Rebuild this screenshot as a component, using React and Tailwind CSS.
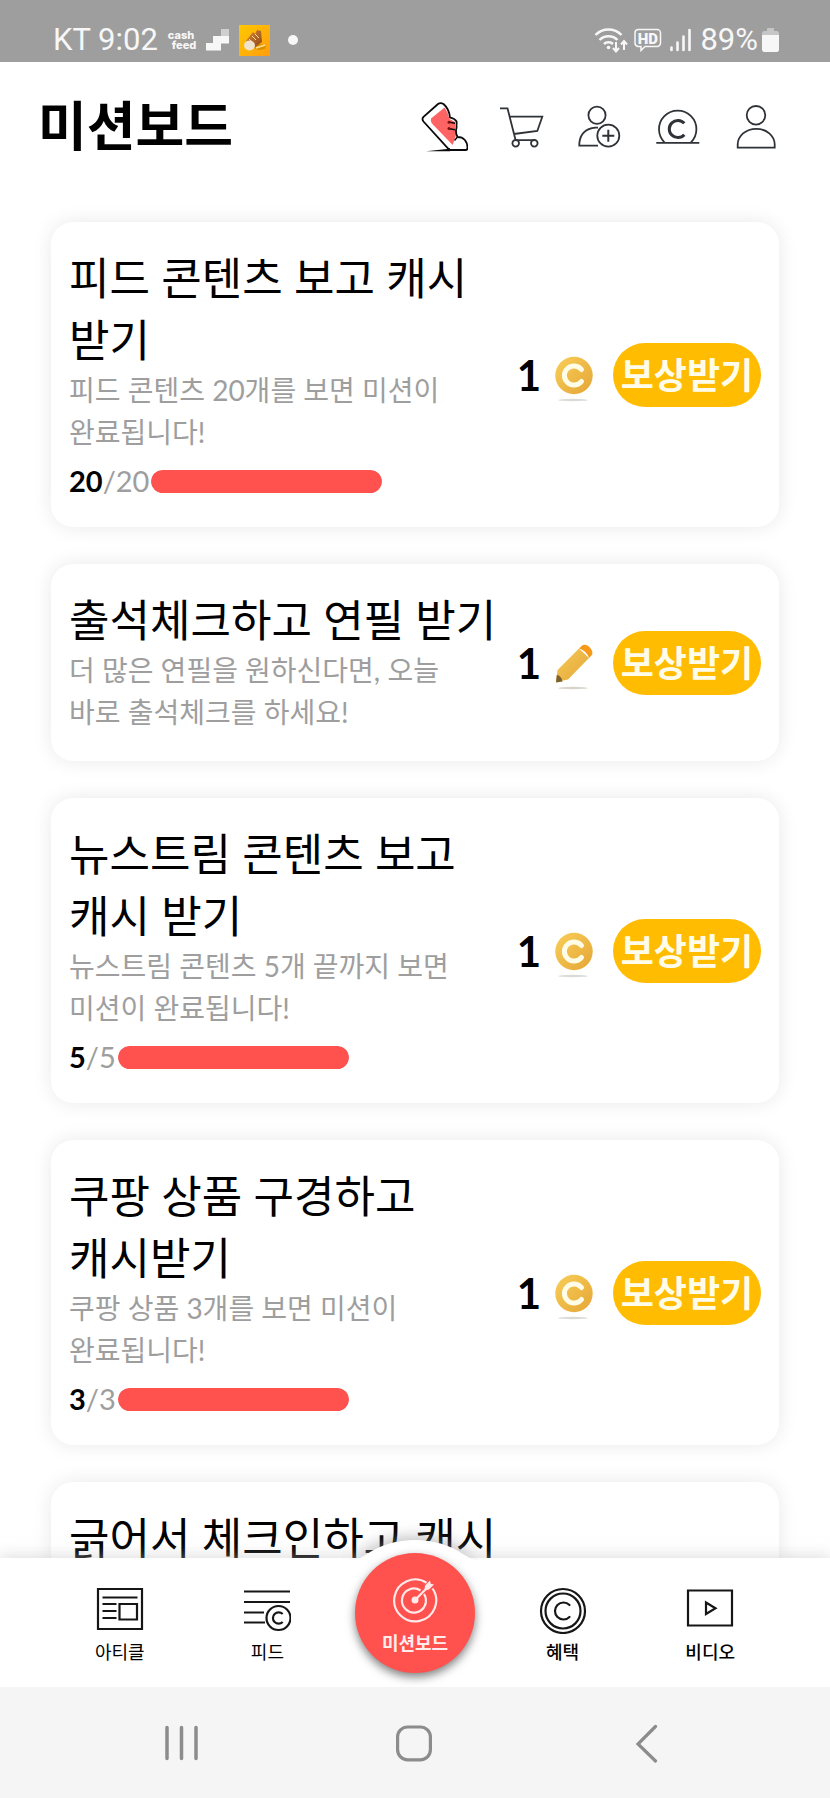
import React from 'react';

const missions = [
  {
    title: '피드 콘텐츠 보고 캐시 받기',
    desc: '피드 콘텐츠 20개를 보면 미션이 완료됩니다!',
    current: 20,
    total: 20,
    reward: 'coin',
  },
  {
    title: '출석체크하고 연필 받기',
    desc: '더 많은 연필을 원하신다면, 오늘 바로 출석체크를 하세요!',
    reward: 'pencil',
  },
  {
    title: '뉴스트림 콘텐츠 보고 캐시 받기',
    desc: '뉴스트림 콘텐츠 5개 끝까지 보면 미션이 완료됩니다!',
    current: 5,
    total: 5,
    reward: 'coin',
  },
  {
    title: '쿠팡 상품 구경하고 캐시받기',
    desc: '쿠팡 상품 3개를 보면 미션이 완료됩니다!',
    current: 3,
    total: 3,
    reward: 'coin',
  },
  { title: '긁어서 체크인하고 캐시' },
];

const StatusBar = () => (
  <div className="flex shrink-0 items-center justify-between bg-[#9e9e9e] pt-[18px] pr-[51px] pl-[53px] font-[Roboto,sans-serif] text-[31px] leading-[44px] text-[#f7f7f7]">
    <div className="flex items-center">
      <span>KT 9:02</span>
      <span className="ml-[10px] flex flex-col font-[Inter,sans-serif] text-[11px] leading-[10px] font-extrabold">
        <span>cash</span>
        <span className="pl-1">feed</span>
      </span>
      <svg className="ml-[10px]" width="23" height="22" viewBox="0 0 23 22">
        <path d="M15 0h8v7h-8z" fill="#cfcfcf" />
        <path d="M7 7h16v7.500h-8V21.500H0V14h7z" fill="#f7f7f7" />
      </svg>
      <svg className="ml-[10px]" width="31" height="31" viewBox="0 0 31 31">
        <defs>
          <linearGradient id="appBg" x1="0" y1="0" x2="1" y2="1">
            <stop offset="0" stopColor="#ffc800" />
            <stop offset="1" stopColor="#ff9d10" />
          </linearGradient>
          <linearGradient id="boot" x1="0" y1="0" x2="1" y2="1">
            <stop offset="0" stopColor="#d98a3a" />
            <stop offset="1" stopColor="#8f4413" />
          </linearGradient>
        </defs>
        <rect width="31" height="31" fill="url(#appBg)" />
        <ellipse cx="21" cy="22" rx="6" ry="3" fill="#d99100" />
        <path d="M17 23l9-3" stroke="#ffe08a" strokeWidth="1.500" />
        <path d="M7 16l7-9 2 2 2-4 4 1 1 11-8 6z" fill="url(#boot)" />
        <path d="M13 11l4 4M16 9l4 4M10 14l4 4" stroke="#ffd9a0" strokeWidth="1" />
        <ellipse cx="10.500" cy="20.500" rx="5.500" ry="5" fill="#efe3cb" />
      </svg>
      <span className="ml-[18px] size-[10px] rounded-full bg-[#f7f7f7]" />
    </div>
    <div className="flex items-center">
      <svg width="34" height="28" viewBox="0 0 34 28" fill="none" stroke="#f7f7f7" strokeWidth="2.500">
        <path d="M1.500 9a18 18 0 0 1 26 0M5.500 14a12.500 12.500 0 0 1 18 0M10 18a6.500 6.500 0 0 1 9 0" />
        <circle cx="14.500" cy="21.500" r="1.800" fill="#f7f7f7" stroke="none" />
        <path d="M22 16v9M19 22l3 3.500 3-3.500M30 24v-8.500M27 18.500l3-3.500 3 3.500" strokeWidth="2" />
      </svg>
      <svg className="ml-[6px]" width="28" height="24" viewBox="0 0 28 24">
        <path
          d="M4 1.500h19a3.500 3.500 0 0 1 3.500 3.500v10a3.500 3.500 0 0 1-3.500 3.500H11l-4 4v-4H4A3.500 3.500 0 0 1 1 15V5a3.500 3.500 0 0 1 3-3.500z"
          fill="none"
          stroke="#f7f7f7"
          strokeWidth="1.500"
        />
        <text x="13.800" y="15.500" textAnchor="middle" fontSize="15" fontWeight="900" fontFamily="Roboto" fill="#f7f7f7">HD</text>
      </svg>
      <svg className="ml-2" width="22" height="24" viewBox="0 0 22 24" stroke="#f7f7f7" strokeWidth="2.600" strokeLinecap="round">
        <path d="M1.500 19.500v2.500M7.500 14.500V22M13.500 8.500V22M19.500 2v20" />
      </svg>
      <span className="ml-2">89%</span>
      <svg className="ml-1" width="17" height="26" viewBox="0 0 17 26">
        <path d="M5 1.500Q5 1 6 1h5q1 0 1 .500V4h2.500Q17 4 17 6.500V9H0V6.500Q0 4 2.500 4H5z" fill="#c6c6c6" />
        <path d="M0 8h17v14.500Q17 25 14.500 25h-12Q0 25 0 22.500z" fill="#f7f7f7" />
      </svg>
    </div>
  </div>
);

const HeaderIcon = ({ label, children }) => (
  <button type="button" aria-label={label}>
    <svg width="48" height="52" viewBox="0 0 48 52" fill="none" stroke="#2f3237" strokeWidth="1.800">
      {children}
    </svg>
  </button>
);

const Header = () => (
  <header className="flex h-32 shrink-0 items-center justify-between bg-white pr-[50px] pl-[38px]">
    <h1 className="text-[53px] leading-[64px] font-bold">미션보드</h1>
    <div className="flex items-center gap-[30px] pt-[2px]">
      <HeaderIcon label="만보기">
        <path
          d="M24.500 6.500L11 17.500q-.500 2.500.700 4.800L32.700 44l2.500-7.500Q37 33 35 28.500L35 21l-5.500-3Q28 11 24.500 6.500z"
          fill="#ff6464"
          stroke="none"
        />
        <path
          d="M18 3L3.500 15.800q-2 2 0 4.700L29.500 49H45.500q2 0 2-2.200C47.300 40.500 44 36 37.500 36C36 33 35.500 30 36.500 27L36.600 20.500C35 17.500 32 17 30 16.500C29.500 11 27 6 23.500 3Q20.500 1.200 18 3z"
          stroke="#0a0a0a"
        />
        <path d="M28.500 21l6.500 1.200M28.500 27.500l6.500 1.200M37.500 36l-3 3.500" stroke="#0a0a0a" strokeWidth="1.400" />
        <circle cx="29" cy="21.200" r="1.500" fill="#7b1010" stroke="none" />
        <circle cx="29" cy="27.600" r="1.500" fill="#7b1010" stroke="none" />
        <path d="M6 50.300l21-2.300 3-1v3.300z" fill="#0a0a0a" stroke="none" />
      </HeaderIcon>
      <HeaderIcon label="쇼핑">
        <path d="M2 7.300h7.500l8 31.500M11.700 15.700h32.600L39.300 30 15.900 33M17.500 39.200H37" />
        <circle cx="17.700" cy="42.300" r="3.300" fill="#fff" />
        <circle cx="36.300" cy="42.300" r="3.300" fill="#fff" />
      </HeaderIcon>
      <HeaderIcon label="친구 추가">
        <circle cx="21" cy="14.300" r="8.600" />
        <path d="M22 44.600H3.300V42.500Q4.500 28 19.500 26.600H22" />
        <circle cx="32.300" cy="34.700" r="11" />
        <path d="M32.300 28.700v12M26.300 34.700h12" strokeWidth="2" />
      </HeaderIcon>
      <HeaderIcon label="캐시">
        <path d="M2.300 41.800H45.300M10.800 41.800a18.700 18.700 0 1 1 25.800 0" />
        <path d="M30.300 22.300a8.600 8.600 0 1 0 0 11.400" strokeWidth="3" />
      </HeaderIcon>
      <HeaderIcon label="내 정보">
        <circle cx="24" cy="14.300" r="9.300" />
        <path d="M5.700 46.600v-3a18.500 15.800 0 0 1 37 0v3z" />
      </HeaderIcon>
    </div>
  </header>
);

const CoinIcon = () => (
  <svg width="38" height="46" viewBox="0 0 38 46">
    <defs>
      <linearGradient id="coin" x1="0" y1="0" x2="1" y2="1">
        <stop offset="0" stopColor="#f8cf58" />
        <stop offset="1" stopColor="#e5a536" />
      </linearGradient>
    </defs>
    <ellipse cx="18" cy="44" rx="15" ry="1.200" fill="#dadad6" />
    <circle cx="19" cy="19.500" r="18.700" fill="url(#coin)" />
    <path d="M26.500 13.500a9.600 9.600 0 1 0 0 12" fill="none" stroke="#fffce8" strokeWidth="5" strokeLinecap="round" />
  </svg>
);

const PencilIcon = () => (
  <svg width="38" height="46" viewBox="0 0 38 46">
    <defs>
      <linearGradient id="pencil" x1="0" y1="0" x2="1" y2="1">
        <stop offset="0" stopColor="#f7ca55" />
        <stop offset="1" stopColor="#e3a63a" />
      </linearGradient>
    </defs>
    <ellipse cx="18" cy="44" rx="15" ry="1.200" fill="#d8d4cc" />
    <path d="M1 38L2.500 26 24 4.500l10 9.500L13 35.500z" fill="url(#pencil)" />
    <path d="M24 4.500l2.500-2.500q2.500-2 6-.500 4.500 3 5 7.500 0 1.500-1.500 3L34 14Q32 7 24 4.500z" fill="#f79a1b" />
    <path d="M1 38.500l.8-7.500q4.500.500 5.700 6.500z" fill="#7d6030" />
  </svg>
);

const MissionCard = ({ mission }) => {
  const { title, desc, current, total, reward } = mission;

  return (
    <li className="flex items-center justify-between rounded-[22px] bg-white px-[18px] pt-[25px] pb-7 shadow-[0_0_20px_rgba(0,0,0,0.09)]">
      <div className="max-w-[432px] break-keep">
        <h2 className="text-[44px] leading-[62px]">{title}</h2>
        {desc && <p className="-mt-[2px] pr-5 text-[28px] leading-[42px] text-[#9e9e9e]">{desc}</p>}
        {total && (
          <div className="mt-[10px] flex h-9 items-center gap-[2px]">
            <span className="text-[29px] leading-9 text-[#9e9e9e]">
              <b className="font-bold text-black">{current}</b>/{total}
            </span>
            <div className="h-[23px] w-[231px] overflow-hidden rounded-full bg-gray-200">
              <div className="h-full rounded-full bg-[#ff524f]" style={{ width: `${(current / total) * 100}%` }} />
            </div>
          </div>
        )}
      </div>
      {reward && (
        <div className="flex shrink-0 items-center pt-1">
          <span className="text-[42px] leading-[62px] font-bold">1</span>
          <span className="mt-2 ml-[14px]">{reward === 'coin' ? <CoinIcon /> : <PencilIcon />}</span>
          <button type="button" className="ml-5 h-16 w-[148px] rounded-full bg-[#ffbc00] text-[36px] leading-[62px] font-bold whitespace-nowrap text-[#fffdea]">
            보상받기
          </button>
        </div>
      )}
    </li>
  );
};

const NavItem = ({ label, medium, children }) => (
  <a href="#" className="flex flex-1 flex-col items-center pt-7">
    <svg width="48" height="48" viewBox="0 0 48 48" fill="none" stroke="#161616" strokeWidth="2.200">
      {children}
    </svg>
    <span className={medium ? 'mt-1 text-[18px] leading-7 font-medium' : 'mt-1 text-[18px] leading-7'}>{label}</span>
  </a>
);

const BottomNav = () => (
  <nav className="relative flex h-[129px] shrink-0 bg-white px-[46px] shadow-[0_-2px_14px_rgba(190,190,190,0.5)]">
    {/* 가운데 볼록한 부분 */}
    <svg className="absolute -top-[44px] left-1/2 -translate-x-1/2" width="200" height="46" viewBox="0 0 200 46">
      <defs>
        <filter id="bump" x="-20%" y="-150%" width="140%" height="400%">
          <feGaussianBlur stdDeviation="8" />
        </filter>
      </defs>
      <path d="M40 46Q65 24 100 24T160 46z" fill="#8a8a8a" fillOpacity="0.6" filter="url(#bump)" />
      <path d="M40 46Q46 44 52 40Q73 26 100 26T148 40Q154 44 160 46z" fill="#fff" />
    </svg>
    <NavItem label="아티클">
      <path d="M2 3h44v40H2zM6.500 11.500h35M6.500 18h14M6.500 25h14M6.500 32h14M23.500 18h17.500v15.500H23.500z" />
    </NavItem>
    <NavItem label="피드">
      <path d="M1 5.500h46M1 16h46M1 26.500h20M1 36.500h21" />
      <circle cx="35.500" cy="32" r="12" />
      <path d="M39.700 28a5.700 5.700 0 1 0 0 8" />
    </NavItem>
    <div className="flex-1" />
    <NavItem label="혜택" medium>
      <circle cx="24" cy="25" r="22" />
      <circle cx="24" cy="25" r="17.500" />
      <path d="M30.500 19a8.500 8.500 0 1 0 0 12" strokeLinecap="round" />
    </NavItem>
    <NavItem label="비디오" medium>
      <path d="M2 4.500h44v35H2zM20 16.500v11.500l9.500-5.750z" />
    </NavItem>
    <a
      href="#"
      aria-current="page"
      className="absolute -top-[5px] left-1/2 flex size-[120px] -translate-x-1/2 flex-col items-center gap-[6px] rounded-full bg-[#ff524f] pt-[22px] text-[18px] leading-7 font-bold text-[#ffeded] shadow-[0_4px_10px_rgba(0,0,0,0.5)]"
    >
      <svg width="48" height="48" viewBox="0 0 48 48" fill="none" stroke="#ffe9e9" strokeWidth="2.200">
        <path d="M35.500 7.700A21 21 0 1 0 41.500 13.500" />
        <path d="M29.500 15.500A12 12 0 1 0 33 19" />
        <circle cx="24" cy="25" r="3.500" fill="#ffe9e9" stroke="none" />
        <path d="M24 25L37 12" />
        <path d="M33.500 15.500l.500-5 5-5 .700 3.300 3.300.700-5 5z" fill="#ffe9e9" stroke="none" />
      </svg>
      <span>미션보드</span>
    </a>
  </nav>
);

const SystemNav = () => (
  <div className="relative flex h-[111px] shrink-0 items-center bg-[#f5f5f5] px-[66px]">
    <button type="button" aria-label="최근 앱" className="flex flex-1 justify-center">
      <svg width="40" height="40" viewBox="0 0 40 40" stroke="#8c8c8c" strokeWidth="3.500" strokeLinecap="round">
        <path d="M5 4.500v31M19.500 4.500v31M34 4.500v31" />
      </svg>
    </button>
    <button type="button" aria-label="홈" className="flex flex-1 justify-center">
      <svg width="40" height="40" viewBox="0 0 40 40" fill="none" stroke="#8c8c8c" strokeWidth="3.200">
        <rect x="2.600" y="4" width="32.800" height="32.800" rx="10" />
      </svg>
    </button>
    <button type="button" aria-label="뒤로" className="flex flex-1 justify-center">
      <svg width="40" height="40" viewBox="0 0 40 40" fill="none" stroke="#8c8c8c" strokeWidth="3.200" strokeLinecap="round">
        <path d="M27.500 3.500L10 21l17.500 17" />
      </svg>
    </button>
  </div>
);

const App = () => {
  return (
    <div className="flex h-screen flex-col overflow-hidden bg-white font-[Lato,'Noto_Sans_CJK_KR',sans-serif] text-black">
      <StatusBar />
      <Header />
      <main className="min-h-0 flex-1 overflow-y-auto px-[51px] pt-8 [scrollbar-width:none]">
        <ul className="flex flex-col gap-[37px]">
          {missions.map((mission) => (
            <MissionCard key={mission.title} mission={mission} />
          ))}
        </ul>
      </main>
      <BottomNav />
      <SystemNav />
    </div>
  );
};

export default App;
